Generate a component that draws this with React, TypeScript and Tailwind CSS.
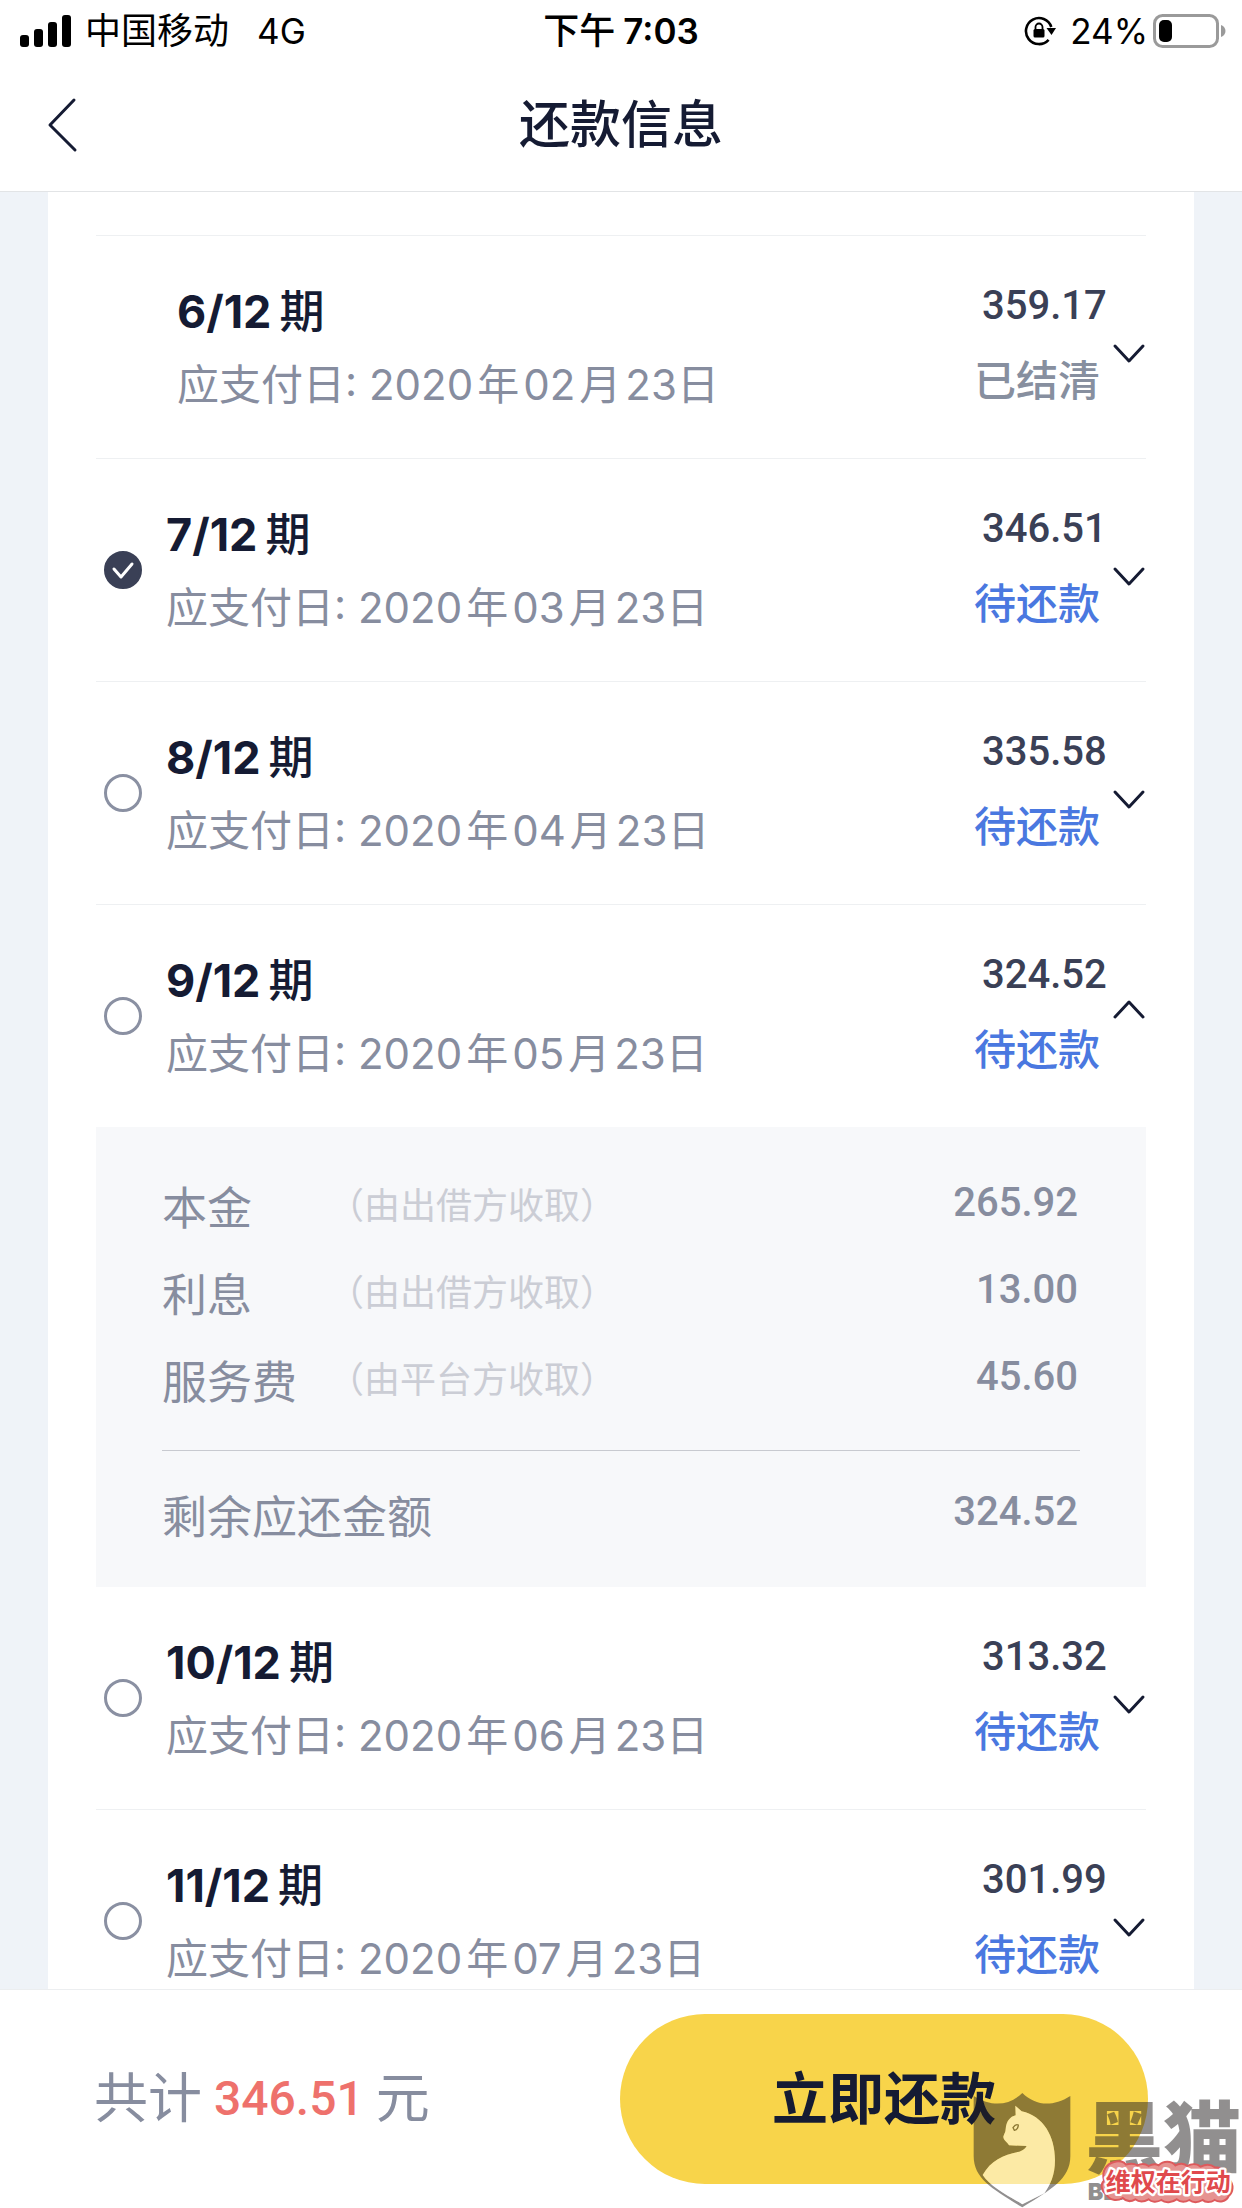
import { useState } from 'react'
import clsx from 'clsx'

type Fee = { label: string; note: string; amount: string }

type Period = {
  no: number
  date: [string, string, string]
  amount: string
  settled?: boolean
  fees?: Fee[]
}

const TOTAL_PERIODS = 12

const PERIODS: Period[] = [
  { no: 6, date: ['2020', '02', '23'], amount: '359.17', settled: true },
  { no: 7, date: ['2020', '03', '23'], amount: '346.51' },
  { no: 8, date: ['2020', '04', '23'], amount: '335.58' },
  {
    no: 9,
    date: ['2020', '05', '23'],
    amount: '324.52',
    fees: [
      { label: '本金', note: '（由出借方收取）', amount: '265.92' },
      { label: '利息', note: '（由出借方收取）', amount: '13.00' },
      { label: '服务费', note: '（由平台方收取）', amount: '45.60' },
    ],
  },
  { no: 10, date: ['2020', '06', '23'], amount: '313.32' },
  { no: 11, date: ['2020', '07', '23'], amount: '301.99' },
]

function StatusBar() {
  return (
    <div className="grid grid-cols-[1fr_auto_1fr] items-center h-[62px] pl-5 pr-4 text-[35px] leading-[62px] text-black">
      <div className="flex items-center">
        <svg width="51" height="32" viewBox="0 0 51 32" aria-hidden="true">
          <rect x="0" y="20" width="9" height="12" rx="3" />
          <rect x="14" y="14" width="9" height="18" rx="3" />
          <rect x="28" y="7" width="9" height="25" rx="3" />
          <rect x="42" y="0" width="9" height="32" rx="3" />
        </svg>
        <span className="ml-3.5 text-[36px]">中国移动</span>
        <span className="ml-7">4G</span>
      </div>
      <div className="flex items-center gap-2 pr-1 font-semibold">
        <span className="text-[36px] font-medium">下午</span>
        <span>7:03</span>
      </div>
      <div className="flex items-center justify-end">
        <svg width="32" height="30" viewBox="0 0 32 30" fill="none" aria-hidden="true">
          <path d="M27.3 11A13 13 0 1 0 24.6 23.8" stroke="#000" strokeWidth="2.6" />
          <path d="M22.5 12H32l-4.5 7z" fill="#000" />
          <rect x="9.5" y="13" width="11" height="8.5" rx="1.5" fill="#000" />
          <path d="M11.5 13.5V11a3.5 3.5 0 0 1 7 0v2.5" stroke="#000" strokeWidth="1.8" />
        </svg>
        <span className="ml-3.5">24%</span>
        <svg className="ml-1" width="74" height="34" viewBox="0 0 74 34" fill="none" aria-hidden="true">
          <rect x="2.5" y="1.5" width="63" height="31" rx="8" stroke="#9a9a9a" strokeWidth="3" />
          <rect x="7" y="6" width="13" height="22" rx="5" fill="#000" />
          <path d="M69 11c6 2 6 10 0 12z" fill="#9a9a9a" />
        </svg>
      </div>
    </div>
  )
}

function Check({ id, checked, onChange }: { id: string; checked: boolean; onChange: () => void }) {
  return (
    <span className="relative ml-2 mr-6 size-[38px] shrink-0">
      <input
        id={id}
        type="checkbox"
        checked={checked}
        onChange={onChange}
        className="block size-[38px] appearance-none rounded-full border-[3px] border-[#8a90a2] checked:border-[#3a4056] checked:bg-[#3a4056]"
      />
      {checked && (
        <svg className="absolute inset-0 pointer-events-none" viewBox="0 0 38 38" fill="none" aria-hidden="true">
          <path d="M10 18l7 8 11-13" stroke="#fff" strokeWidth="3" strokeLinecap="round" strokeLinejoin="round" />
        </svg>
      )}
    </span>
  )
}

function Fees({ fees, total }: { fees: Fee[]; total: string }) {
  return (
    <dl className="bg-[#f7f8fa] px-[66px] pt-[38px] pb-[26px] text-[45px] leading-[87px] text-[#878d9f]">
      {fees.map(fee => (
        <div key={fee.label} className="flex items-center">
          <dt className="flex flex-1 items-center">
            <span className="w-[166px]">{fee.label}</span>
            <span className="pb-1 text-[36px] leading-[83px] text-[#cbcdd5]">{fee.note}</span>
          </dt>
          <dd className="pb-3 pr-0.5 text-[40px] leading-[75px] font-[Roboto,sans-serif] font-medium">{fee.amount}</dd>
        </div>
      ))}
      <div className="mt-6 flex items-center border-t border-[#c8cad0] pt-[23px]">
        <dt className="flex-1">剩余应还金额</dt>
        <dd className="pb-3 pr-0.5 text-[40px] leading-[75px] font-[Roboto,sans-serif] font-medium">{total}</dd>
      </div>
    </dl>
  )
}

type RowProps = {
  period: Period
  checked: boolean
  open: boolean
  onCheck: () => void
  onToggle: () => void
}

function PeriodRow({ period, checked, open, onCheck, onToggle }: RowProps) {
  const id = `period-${period.no}`
  const [year, month, day] = period.date
  const expanded = open && !!period.fees

  return (
    <li className={clsx(!expanded && 'border-b border-[#eef0f2]')}>
      <div className="flex items-center py-8">
        {!period.settled && <Check id={id} checked={checked} onChange={onCheck} />}
        <label htmlFor={period.settled ? undefined : id} className={clsx('block flex-1 pt-0.5', period.settled && 'pl-[81px]')}>
          <span className="flex items-center gap-2 text-[45px] leading-[73px] font-bold text-[#151b33]">
            {period.no}/{TOTAL_PERIODS}
            <span className="font-medium">期</span>
          </span>
          <span className="flex items-center gap-1 text-[42px] leading-[73px] text-[#878d9f]">
            <span>应支付日: {year}</span>
            <span>年</span>
            <span>{month}</span>
            <span>月</span>
            <span>{day}日</span>
          </span>
        </label>
        <div className="w-[126px] shrink-0 pb-2 leading-[75px]">
          <div className="pl-2 text-[40px] font-medium font-[Roboto,sans-serif] text-[#3a4056]">{period.amount}</div>
          <div className={clsx('text-[42px] font-medium', period.settled ? 'text-[#878f9f]' : 'text-[#4a78e0]')}>
            {period.settled ? '已结清' : '待还款'}
          </div>
        </div>
        <button type="button" onClick={onToggle} aria-expanded={expanded} aria-label="展开明细" className="ml-3">
          <svg className={clsx('block', expanded && 'rotate-180')} width="34" height="34" viewBox="0 0 34 34" fill="none" aria-hidden="true">
            <path d="M3 16l14 15 14-15" stroke="#151b33" strokeWidth="3" strokeLinecap="round" strokeLinejoin="round" />
          </svg>
        </button>
      </div>
      {expanded && <Fees fees={period.fees!} total={period.amount} />}
    </li>
  )
}

function Watermark() {
  return (
    <svg className="absolute right-0 bottom-0 w-[302px] h-[148px] pointer-events-none" viewBox="0 0 906 444" aria-hidden="true">
      <g fill="#231f20" fillOpacity="0.5">
        <path
          fillRule="evenodd"
          d="M247 99c-38 37-90 44-146 9v180c0 70 60 100 146 154 86-54 144-84 144-154V108c-56 35-106 28-144-9zM226 137l19 17c66 14 100 76 100 146 0 46-14 74-32 100l-66 33C200 405 150 378 128 345c24-44 65-62 110-70 12-4 18-9 22-17l-53-2c-4-9-17-15-17-26 2-9 7-13 7-23 2-23 13-37 30-41z"
        />
        <text x="436" y="320" fontSize="234" fontWeight="900">黑猫</text>
        <text x="443" y="420" fontSize="70" fontWeight="900">BLACK CAT</text>
      </g>
      <path
        fill="#fff"
        fillOpacity="0.5"
        d="M226 137l19 17c66 14 100 76 100 146 0 46-14 74-32 100l-66 33C200 405 150 378 128 345c24-44 65-62 110-70 12-4 18-9 22-17l-53-2c-4-9-17-15-17-26 2-9 7-13 7-23 2-23 13-37 30-41z"
      />
      <path d="M219 203q8-12 16-8-1 14-12 16z" fill="none" stroke="#8c7833" strokeWidth="4" />
      {/* Scalloped red badge */}
      <path
        d="M522 306c16-6 30 0 36 8 12-4 24-4 34 2 12-6 26-4 34 2 10-6 22-6 30-2 14-14 38-14 50 0 12-8 28-6 36 2 14-8 30-6 40 2 16-8 32-6 42 2 22 0 40 14 44 36 14 16 12 38-2 50-8 18-28 20-42 12-12 8-28 8-36 0-14 8-30 8-40 0-14 8-28 6-38-2-14 10-34 12-46 2-14 8-30 6-38-2-14 8-30 8-40 0-14 8-28 6-38-4-16 10-40 8-48-10-16-10-20-30-8-42-8-30 8-50 30-56z"
        fill="#e69391"
        stroke="#dd5a5c"
        strokeWidth="6"
      />
      <text x="497" y="392" fontSize="75" fontWeight="700" fill="#e0494d" stroke="#fff" strokeWidth="14" strokeLinejoin="round" paintOrder="stroke">
        维权在行动
      </text>
    </svg>
  )
}

export default function App() {
  const [selected, setSelected] = useState<number[]>([7])
  const [open, setOpen] = useState<number | null>(9)

  const toggle = (no: number) =>
    setSelected(prev => (prev.includes(no) ? prev.filter(n => n !== no) : [...prev, no]))

  const total = PERIODS.filter(p => selected.includes(p.no)).reduce((sum, p) => sum + Number(p.amount), 0)

  return (
    <div className="relative flex h-screen flex-col overflow-hidden bg-white font-[Inter,'Noto_Sans_CJK_SC',sans-serif]">
      {/* Header */}
      <header className="border-b border-[#e2e4e6]">
        <StatusBar />
        <div className="grid grid-cols-[1fr_auto_1fr] items-center px-11 h-[129px]">
          <button type="button" aria-label="返回" className="justify-self-start pb-1">
            <svg className="block" width="36" height="56" viewBox="0 0 36 56" fill="none" aria-hidden="true">
              <path d="M30 3L6 28l25 25" stroke="#151b33" strokeWidth="3" strokeLinecap="round" strokeLinejoin="round" />
            </svg>
          </button>
          <h1 className="pb-1 text-[51px] leading-[60px] font-medium text-[#151b33]">还款信息</h1>
        </div>
      </header>

      {/* Period list */}
      <main className="min-h-0 flex-1 overflow-hidden bg-[#eff3f8] px-12">
        <div className="min-h-full bg-white px-12 pt-[43px]">
          <ul className="border-t border-[#eef0f2]">
            {PERIODS.map(period => (
              <PeriodRow
                key={period.no}
                period={period}
                checked={selected.includes(period.no)}
                open={open === period.no}
                onCheck={() => toggle(period.no)}
                onToggle={() => setOpen(open === period.no ? null : period.no)}
              />
            ))}
          </ul>
        </div>
      </main>

      {/* Pay bar */}
      <footer className="flex items-center justify-between border-t border-[#eceef0] px-[94px] py-6">
        <p className="flex items-center text-[54px] leading-[80px] text-[#878d9f]">
          共计
          <span className="mx-3 text-[48px] font-medium font-[Roboto,sans-serif] text-[#ee716c]">{total.toFixed(2)}</span>
          元
        </p>
        <button type="button" className="h-[170px] w-[528px] rounded-full bg-[#f8d44a] text-[56px] font-semibold text-[#151b33]">
          立即还款
        </button>
      </footer>

      <Watermark />
    </div>
  )
}
